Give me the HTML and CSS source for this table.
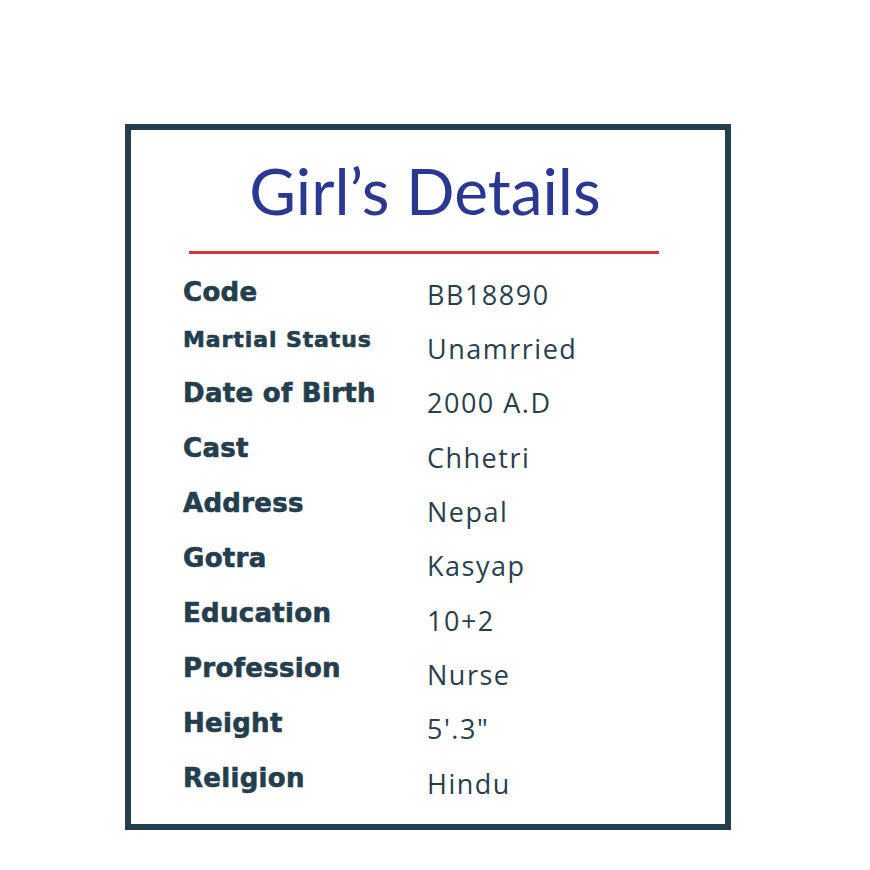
FILE: index.html
```html
<!DOCTYPE html>
<html>
<head>
<meta charset="utf-8">
<link rel="stylesheet" href="styles.css">
</head>
<body>
<div class="card">
  <h1 class="title">Girl’s Details</h1>
  <div class="rule"></div>
  <div class="details">
    <div class="labels">
      <div class="label l-short">Code</div>
      <div class="label l-short small">Martial Status</div>
      <div class="label">Date of Birth</div>
      <div class="label">Cast</div>
      <div class="label">Address</div>
      <div class="label">Gotra</div>
      <div class="label">Education</div>
      <div class="label">Profession</div>
      <div class="label">Height</div>
      <div class="label">Religion</div>
    </div>
    <div class="values">
      <div class="value">BB18890</div>
      <div class="value">Unamrried</div>
      <div class="value">2000 A.D</div>
      <div class="value">Chhetri</div>
      <div class="value">Nepal</div>
      <div class="value">Kasyap</div>
      <div class="value">10+2</div>
      <div class="value">Nurse</div>
      <div class="value">5'.3"</div>
      <div class="value">Hindu</div>
    </div>
  </div>
</div>
</body>
</html>
```

FILE: styles.css
```css
html, body {
  margin: 0;
  padding: 0;
  background: #ffffff;
}
body {
  width: 870px;
  height: 870px;
  padding-top: 124px;
  padding-left: 125px;
  box-sizing: border-box;
}
.card {
  box-sizing: border-box;
  width: 606px;
  height: 706px;
  border: 6.5px solid #243e4e;
  padding-top: 29px;
}
.title {
  margin: 0;
  text-align: center;
  font-family: "Lato", sans-serif;
  font-weight: 400;
  font-size: 64px;
  line-height: 64px;
  color: #2b3891;
  padding-right: 6px;
}
.rule {
  margin: 28px 0 0 58px;
  width: 470px;
  height: 2.5px;
  background: #d8353c;
}
.details {
  display: flex;
  margin-top: 10px;
  padding-left: 52px;
  color: #243e4e;
}
.labels {
  width: 244px;
  display: flex;
  flex-direction: column;
  padding-top: 1px;
  font-family: "DejaVu Sans", sans-serif;
}
.label {
  height: 55px;
  line-height: 55px;
  font-size: 26px;
  font-weight: 700;
  letter-spacing: 0.3px;
  -webkit-text-stroke: 0.6px #243e4e;
  white-space: nowrap;
}
.label.l-short {
  height: 50.5px;
}
.label.small {
  font-size: 22px;
  letter-spacing: 0.9px;
  line-height: 50px;
}
.values {
  display: flex;
  flex-direction: column;
  padding-top: 4.4px;
  font-family: "Open Sans", sans-serif;
}
.value {
  height: 54.3px;
  line-height: 54.3px;
  font-size: 27px;
  font-weight: 400;
  letter-spacing: 1.5px;
  color: #2a3f4e;
  white-space: nowrap;
}
```
